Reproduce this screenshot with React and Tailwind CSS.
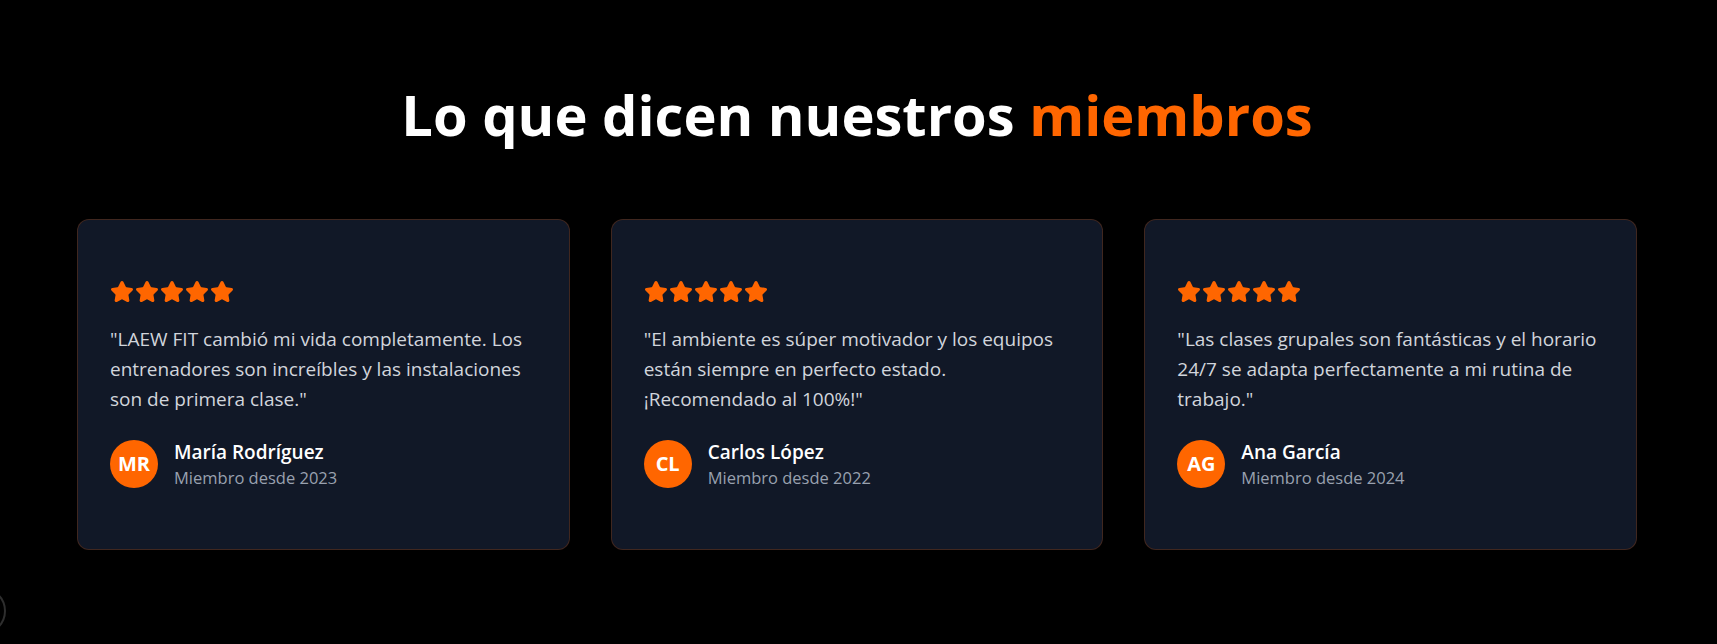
import { Star } from "lucide-react";

const testimonials = [
  {
    quote:
      '"LAEW FIT cambió mi vida completamente. Los entrenadores son increíbles y las instalaciones son de primera clase."',
    initials: "MR",
    name: "María Rodríguez",
    since: "Miembro desde 2023",
  },
  {
    quote:
      '"El ambiente es súper motivador y los equipos están siempre en perfecto estado. ¡Recomendado al 100%!"',
    initials: "CL",
    name: "Carlos López",
    since: "Miembro desde 2022",
  },
  {
    quote:
      '"Las clases grupales son fantásticas y el horario 24/7 se adapta perfectamente a mi rutina de trabajo."',
    initials: "AG",
    name: "Ana García",
    since: "Miembro desde 2024",
  },
];

function TestimonialCard({ quote, initials, name, since }) {
  return (
    <div className="h-[331px] flex flex-col justify-center px-8 bg-[#111827] border border-[#ff6600]/20 rounded-xl">
      <div className="flex gap-[1px] mb-5">
        {[0, 1, 2, 3, 4].map((i) => (
          <Star key={i} className="w-6 h-6 text-[#ff6600] fill-[#ff6600]" />
        ))}
      </div>
      <p className="text-[19px] leading-[30px] text-gray-300 mb-6">{quote}</p>
      <div className="flex items-center gap-4">
        <div className="w-12 h-12 rounded-full bg-[#ff6600] flex items-center justify-center text-white text-xl font-bold">
          {initials}
        </div>
        <div className="flex flex-col">
          <span className="text-[19px] font-semibold text-white leading-7">{name}</span>
          <span className="text-[16.5px] text-gray-400 leading-6">{since}</span>
        </div>
      </div>
    </div>
  );
}

export default function App() {
  return (
    <div
      className="min-h-screen bg-black relative overflow-hidden"
      style={{ fontFamily: '"Segoe UI", "Open Sans", "Noto Sans", sans-serif' }}
    >
      <section className="pt-[84px] pl-[77px] pr-[80px] pb-16">
        <h2 className="text-center text-[56px] leading-[60px] font-bold text-white mb-[75px]">
          Lo que dicen nuestros <span className="text-[#ff6600]">miembros</span>
        </h2>
        <div className="grid grid-cols-3 gap-[41px]">
          {testimonials.map((t) => (
            <TestimonialCard key={t.name} {...t} />
          ))}
        </div>
      </section>
      <div className="fixed left-[-42px] bottom-[9px] w-12 h-12 rounded-full border-2 border-[#2e2e2e]" />
    </div>
  );
}
